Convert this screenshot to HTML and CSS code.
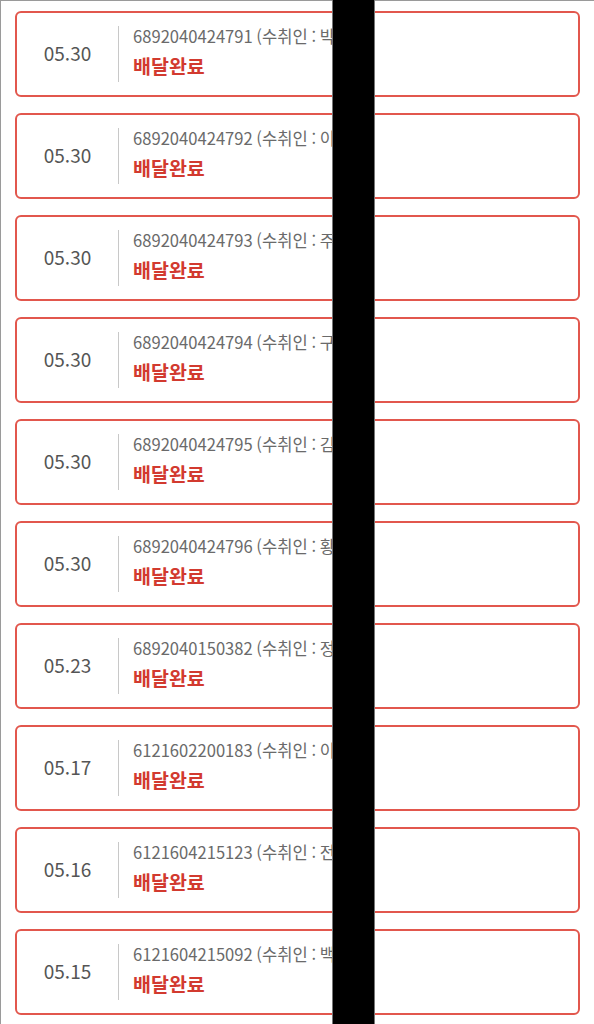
FILE: index.html
```html
<!DOCTYPE html>
<html lang="ko">
<head>
<meta charset="utf-8">
<title>배송조회</title>
<link rel="stylesheet" href="styles.css">
</head>
<body>
<div class="page">
  <ul class="list">
    <li class="card"><div class="date">05.30</div><div class="info"><div class="num">6892040424791 (수취인 : 박**)</div><div class="status">배달완료</div></div></li>
    <li class="card"><div class="date">05.30</div><div class="info"><div class="num">6892040424792 (수취인 : 이**)</div><div class="status">배달완료</div></div></li>
    <li class="card"><div class="date">05.30</div><div class="info"><div class="num">6892040424793 (수취인 : 주**)</div><div class="status">배달완료</div></div></li>
    <li class="card"><div class="date">05.30</div><div class="info"><div class="num">6892040424794 (수취인 : 구**)</div><div class="status">배달완료</div></div></li>
    <li class="card"><div class="date">05.30</div><div class="info"><div class="num">6892040424795 (수취인 : 김**)</div><div class="status">배달완료</div></div></li>
    <li class="card"><div class="date">05.30</div><div class="info"><div class="num">6892040424796 (수취인 : 황**)</div><div class="status">배달완료</div></div></li>
    <li class="card"><div class="date">05.23</div><div class="info"><div class="num">6892040150382 (수취인 : 정**)</div><div class="status">배달완료</div></div></li>
    <li class="card"><div class="date">05.17</div><div class="info"><div class="num">6121602200183 (수취인 : 이**)</div><div class="status">배달완료</div></div></li>
    <li class="card"><div class="date">05.16</div><div class="info"><div class="num">6121604215123 (수취인 : 전**)</div><div class="status">배달완료</div></div></li>
    <li class="card"><div class="date">05.15</div><div class="info"><div class="num">6121604215092 (수취인 : 백**)</div><div class="status">배달완료</div></div></li>
  </ul>
  <div class="redact"></div>
</div>
</body>
</html>
```
FILE: styles.css
```css
* { box-sizing: border-box; }
html, body { margin: 0; padding: 0; background: #fff; }
body {
  font-family: "Noto Sans CJK KR", "Noto Sans", sans-serif;
  height: 1024px;
  overflow: hidden;
}
.page {
  position: relative;
  height: 1024px;
  border-left: 1px solid #9a9a9a;
  border-top: 1px solid #9a9a9a;
}
.list {
  list-style: none;
  margin: 0;
  padding: 10px 14px 0 14px;
  display: flex;
  flex-direction: column;
  gap: 16px;
}
.card {
  height: 86px;
  border: 2px solid #e2574d;
  border-radius: 6px;
  display: flex;
  align-items: center;
  padding: 14px 0;
}
.date {
  flex: 0 0 101px;
  text-align: center;
  font-size: 19px;
  color: #555;
  line-height: 24px;
  padding-bottom: 3px;
}
.info {
  height: 56px;
  border-left: 1px solid #c8c8c8;
  padding-left: 14px;
  display: flex;
  flex-direction: column;
  justify-content: center;
  gap: 6px;
  padding-bottom: 4px;
}
.num {
  font-size: 16.6px;
  line-height: 22px;
  color: #6a6a6a;
  white-space: nowrap;
  word-spacing: -1px;
}
.status {
  font-size: 19.5px;
  line-height: 26px;
  font-weight: 700;
  color: #d23a2f;
}
.redact {
  position: absolute;
  top: -1px;
  left: 331px;
  width: 43px;
  height: 1025px;
  background: #000;
  border-left: 1px solid #777;
  border-right: 1px solid #777;
}
```
